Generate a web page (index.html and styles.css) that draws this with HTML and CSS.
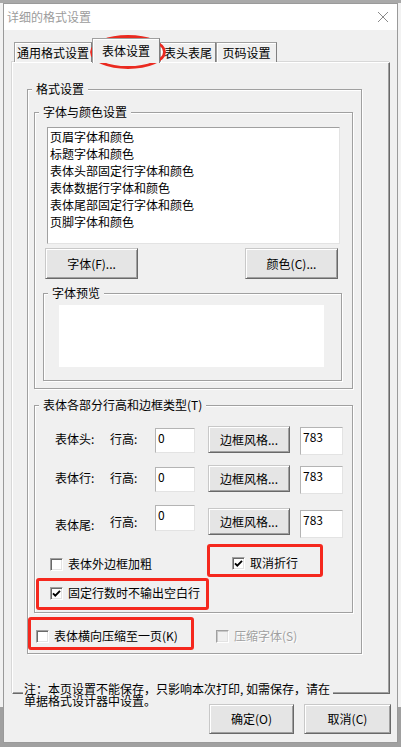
FILE: index.html
```html
<!DOCTYPE html>
<html lang="zh-CN">
<head>
<meta charset="utf-8">
<title>详细的格式设置</title>
<link rel="stylesheet" href="styles.css">
</head>
<body>
<div class="window">
  <div class="titlebar">
    <span class="title">详细的格式设置</span>
    <svg class="close" width="12" height="12" viewBox="0 0 12 12"><path d="M1 1 L11 11 M11 1 L1 11" stroke="#8a8a8a" stroke-width="1" fill="none"/></svg>
  </div>
  <div class="content">
    <div class="tabs">
      <div class="tab t1">通用格式设置</div>
      <div class="tab t2 active">表体设置</div>
      <div class="tab t3">表头表尾</div>
      <div class="tab t4">页码设置</div>
    </div>
    <div class="panel">
      <div class="group g-format">
        <span class="legend">格式设置</span>
        <div class="group g-font">
          <span class="legend">字体与颜色设置</span>
          <div class="listbox">
            <div>页眉字体和颜色</div>
            <div>标题字体和颜色</div>
            <div>表体头部固定行字体和颜色</div>
            <div>表体数据行字体和颜色</div>
            <div>表体尾部固定行字体和颜色</div>
            <div>页脚字体和颜色</div>
          </div>
          <div class="btn-row">
            <div class="btn big">字体(F)...</div>
            <div class="btn big">颜色(C)...</div>
          </div>
          <div class="group g-preview">
            <span class="legend">字体预览</span>
            <div class="preview"></div>
          </div>
        </div>
        <div class="group g-rows">
          <span class="legend">表体各部分行高和边框类型(T)</span>
          <div class="row r1">
            <span class="lbl1">表体头:</span><span class="lbl2">行高:</span>
            <div class="inp inp1">0</div>
            <div class="btn bbtn">边框风格...</div>
            <div class="inp inp2">783</div>
          </div>
          <div class="row r2">
            <span class="lbl1">表体行:</span><span class="lbl2">行高:</span>
            <div class="inp inp1">0</div>
            <div class="btn bbtn">边框风格...</div>
            <div class="inp inp2">783</div>
          </div>
          <div class="row r3">
            <span class="lbl1">表体尾:</span><span class="lbl2">行高:</span>
            <div class="inp inp1">0</div>
            <div class="btn bbtn">边框风格...</div>
            <div class="inp inp2">783</div>
          </div>
          <div class="chk-row-a">
            <div class="cell-left">
              <div class="chk"><span class="box"></span>表体外边框加粗</div>
            </div>
            <div class="mark mark-a">
              <div class="chk"><span class="box"><svg width="11" height="11" viewBox="0 0 11 11"><path d="M2 5.3 L4.3 7.6 L9 2.9" stroke="#000" stroke-width="1.9" fill="none"/></svg></span>取消折行</div>
            </div>
          </div>
          <div class="mark mark-b">
            <div class="chk"><span class="box"><svg width="11" height="11" viewBox="0 0 11 11"><path d="M2 5.3 L4.3 7.6 L9 2.9" stroke="#000" stroke-width="1.9" fill="none"/></svg></span>固定行数时不输出空白行</div>
          </div>
        </div>
        <div class="chk-row-c">
          <div class="mark mark-c">
            <div class="chk"><span class="box"></span>表体横向压缩至一页(K)</div>
          </div>
          <div class="chk disabled"><span class="box"></span>压缩字体(S)</div>
        </div>
      </div>
    </div>
    <div class="footer">
      <div class="note">注：本页设置不能保存，只影响本次打印, 如需保存，请在<br>单据格式设计器中设置。</div>
      <div class="buttons">
        <div class="btn fbtn ok">确定(O)</div>
        <div class="btn fbtn cancel">取消(C)</div>
      </div>
    </div>
  </div>
  <svg class="ellipse" width="80" height="40" viewBox="0 0 80 40"><ellipse cx="38" cy="19" rx="36.5" ry="15.5" fill="none" stroke="#ea2a20" stroke-width="2.8"/></svg>
</div>
</body>
</html>
```

FILE: styles.css
```css
* {
  box-sizing: border-box;
}

html, body {
  margin: 0;
  padding: 0;
}

body {
  width: 401px;
  height: 747px;
  overflow: hidden;
  background: linear-gradient(to bottom, #a9a9a9 0, #a9a9a9 3px, #f2f2f2 3px, #f2f2f2 707px, #a0a0a0 707px);
  font-family: "Noto Sans CJK SC", "Microsoft YaHei", sans-serif;
  font-size: 12px;
  color: #000;
}

.window {
  position: relative;
  margin: 3px 0 0 3px;
  width: 395px;
  height: 740px;
  border: 1px solid #9a9a9a;
  background: #f0f0f0;
}

.titlebar {
  height: 26px;
  background: #fff;
  display: flex;
  align-items: center;
  padding-left: 3px;
}

.title {
  color: #9c9c9c;
  line-height: 16px;
  font-size: 12px;
}

.close {
  margin-left: auto;
  margin-right: 8px;
}

.content {
  padding: 8px 6px 0 8px;
}

.tabs {
  display: flex;
  align-items: flex-end;
  height: 24px;
  padding-left: 2px;
}

.tab {
  height: 20px;
  border: 1px solid #a0a0a0;
  border-bottom: 0;
  border-right-color: #808080;
  background: #f0f0f0;
  box-shadow: inset 1px 1px 0 #fff;
  line-height: 19px;
  text-align: center;
  white-space: nowrap;
}

.t1 { width: 78px; }
.t2 { width: 68px; }
.t3 { width: 56px; }
.t4 { width: 61px; }

.tab.active {
  position: relative;
  z-index: 1;
  height: 25px;
  margin-bottom: -1px;
  line-height: 23px;
}

.panel {
  width: 378px;
  height: 632px;
  border-top: 1px solid #fff;
  border-left: 1px solid #fff;
  border-right: 1px solid #696969;
  border-bottom: 1px solid #696969;
  box-shadow: inset -1px -1px 0 #a0a0a0, -1px -1px 0 #d8d8d8;
  padding: 26px 0 0 14px;
}

.group {
  position: relative;
  border: 1px solid #a0a0a0;
  box-shadow: 1px 1px 0 #fff, inset 1px 1px 0 #fff;
}

.legend {
  position: absolute;
  top: -9px;
  left: 4px;
  padding: 0 4px;
  background: #f0f0f0;
  line-height: 16px;
  white-space: nowrap;
}

.g-format {
  width: 335px;
  height: 565px;
}

.g-font {
  margin: 22px 0 0 6px;
  width: 319px;
  height: 277px;
}

.listbox {
  margin: 14px 0 0 12px;
  width: 293px;
  height: 117px;
  background: #fff;
  border: 1px solid;
  border-color: #a0a0a0 #e3e3e3 #e3e3e3 #a0a0a0;
  padding: 0 0 0 2px;
  line-height: 17px;
}

.btn {
  background: #e5e5e5;
  border: 1px solid;
  border-color: #c8c8c8 #696969 #696969 #c8c8c8;
  box-shadow: inset 1px 1px 0 #fff, inset -1px -1px 0 #a0a0a0;
  text-align: center;
  white-space: nowrap;
}

.btn-row {
  display: flex;
  justify-content: space-between;
  margin: 4px 14px 0 10px;
}

.btn.big {
  width: 93px;
  height: 31px;
  line-height: 29px;
}

.g-preview {
  margin: 14px 0 0 8px;
  width: 299px;
  height: 88px;
}

.preview {
  margin: 11px 0 0 15px;
  width: 265px;
  height: 62px;
  background: #fff;
}

.g-rows {
  margin: 16px 0 0 6px;
  width: 319px;
  height: 208px;
}

.row {
  display: flex;
  align-items: flex-start;
  padding-left: 20px;
}

.r1 { margin-top: 20px; height: 29px; }
.r2 { margin-top: 10px; height: 29px; }
.r3 { margin-top: 11px; height: 33px; }

.lbl1, .lbl2 {
  margin-top: 5px;
  line-height: 16px;
  white-space: nowrap;
}

.lbl1 { width: 55px; }
.lbl2 { width: 45px; }

.inp {
  background: #fff;
  border: 1px solid;
  border-color: #b4b4b4 #e3e3e3 #e3e3e3 #b4b4b4;
  padding: 1px 0 0 2px;
  line-height: 16px;
}

.inp1 {
  width: 40px;
  height: 25px;
  margin-top: 2px;
}

.bbtn {
  width: 82px;
  height: 27px;
  margin-left: 13px;
  line-height: 25px;
}

.inp2 {
  width: 43px;
  height: 28px;
  margin-top: 1px;
  margin-left: 10px;
}

.r3 .lbl1 { margin-top: 12px; }
.r3 .lbl2 { margin-top: 9px; }
.r3 .inp1 { margin-top: 0; height: 26px; }
.r3 .bbtn { margin-top: 3px; }
.r3 .inp2 { margin-top: 5px; }

.chk {
  display: flex;
  align-items: center;
  height: 16px;
  line-height: 16px;
  white-space: nowrap;
}

.box {
  width: 13px;
  height: 13px;
  margin-right: 5px;
  background: #fff;
  border: 1px solid;
  border-color: #a0a0a0 #fff #fff #a0a0a0;
  box-shadow: inset 1px 1px 0 #696969, inset -1px -1px 0 #e3e3e3;
  flex: none;
}

.box svg {
  display: block;
}

.chk-row-a {
  display: grid;
  grid-template-columns: 172px 116px;
  margin-top: 6px;
  height: 33px;
}

.cell-left {
  padding: 12px 0 0 15px;
}

.mark {
  border: 3px solid #f5281e;
  border-radius: 3px;
}

.mark-a {
  height: 33px;
  padding: 8px 0 0 22px;
}

.mark-b {
  margin: 1px 0 0 1px;
  width: 173px;
  height: 32px;
  padding: 4px 0 0 11px;
}

.chk-row-c {
  display: flex;
  align-items: flex-start;
  margin-top: 4px;
}

.mark-c {
  width: 166px;
  height: 33px;
  padding: 8px 0 0 5px;
  flex: none;
}

.chk.disabled {
  margin: 11px 0 0 22px;
  color: #a0a0a0;
  text-shadow: 1px 1px 0 #fff;
}

.chk.disabled .box {
  background: #f0f0f0;
  box-shadow: inset 1px 1px 0 #c8c8c8, inset -1px -1px 0 #e3e3e3;
}

.footer {
  display: flex;
  flex-direction: column;
}

.note {
  margin: -11px 0 0 11px;
  width: 310px;
  height: 24px;
  background: #f0f0f0;
  line-height: 12px;
  white-space: nowrap;
  padding-left: 1px;
}

.buttons {
  display: flex;
  justify-content: flex-end;
  gap: 10px;
  margin-top: -3px;
}

.fbtn {
  height: 30px;
  line-height: 28px;
}

.ok { width: 85px; }
.cancel { width: 87px; }

.ellipse {
  position: absolute;
  left: 86px;
  top: 29px;
}
```
